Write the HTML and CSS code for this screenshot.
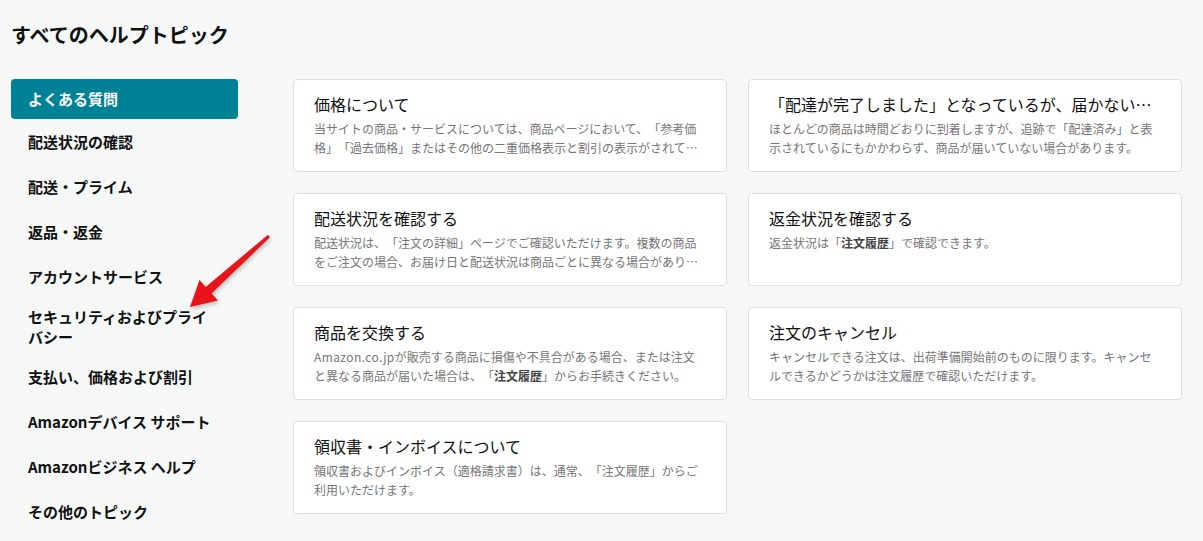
FILE: index.html
```html
<!DOCTYPE html>
<html lang="ja">
<head>
<meta charset="utf-8">
<title>すべてのヘルプトピック</title>
<link rel="stylesheet" href="styles.css">
</head>
<body>
<div class="page">
  <h1 class="heading">すべてのヘルプトピック</h1>
  <div class="layout">
    <nav class="sidebar">
      <a class="nav-item active">よくある質問</a>
      <a class="nav-item">配送状況の確認</a>
      <a class="nav-item">配送・プライム</a>
      <a class="nav-item">返品・返金</a>
      <a class="nav-item">アカウントサービス</a>
      <a class="nav-item">セキュリティおよびプライバシー</a>
      <a class="nav-item">支払い、価格および割引</a>
      <a class="nav-item">Amazonデバイス サポート</a>
      <a class="nav-item">Amazonビジネス ヘルプ</a>
      <a class="nav-item">その他のトピック</a>
    </nav>
    <div class="cards">
      <div class="card">
        <div class="card-title">価格について</div>
        <div class="card-desc">当サイトの商品・サービスについては、商品ページにおいて、「参考価格」「過去価格」またはその他の二重価格表示と割引の表示がされている場合があります。</div>
      </div>
      <div class="card">
        <div class="card-title">「配達が完了しました」となっているが、届かない場合</div>
        <div class="card-desc">ほとんどの商品は時間どおりに到着しますが、追跡で「配達済み」と表示されているにもかかわらず、商品が届いていない場合があります。</div>
      </div>
      <div class="card">
        <div class="card-title">配送状況を確認する</div>
        <div class="card-desc">配送状況は、「注文の詳細」ページでご確認いただけます。複数の商品をご注文の場合、お届け日と配送状況は商品ごとに異なる場合があります。</div>
      </div>
      <div class="card">
        <div class="card-title">返金状況を確認する</div>
        <div class="card-desc">返金状況は「<b>注文履歴</b>」で確認できます。</div>
      </div>
      <div class="card">
        <div class="card-title">商品を交換する</div>
        <div class="card-desc"><span class="latin">Amazon.co.jp</span>が販売する商品に損傷や不具合がある場合、または注文<span class="keep">と異なる</span>商品が届いた場合は、「<b>注文履歴</b>」からお手続きください。</div>
      </div>
      <div class="card">
        <div class="card-title">注文のキャンセル</div>
        <div class="card-desc">キャンセルできる注文は、出荷準備開始前のものに限ります。キャンセルできるかどうかは注文履歴で確認いただけます。</div>
      </div>
      <div class="card">
        <div class="card-title">領収書・インボイスについて</div>
        <div class="card-desc">領収書およびインボイス（適格請求書）は、通常、「注文履歴」からご利用いただけます。</div>
      </div>
    </div>
  </div>
</div>
<svg class="arrow" width="1203" height="541" viewBox="0 0 1203 541" aria-hidden="true">
  <polygon points="270,237.3 211.5,293.4 218,300.5 190,307 199.5,280 205.7,287 268,234.7" fill="#e8131b"/>
</svg>
</body>
</html>
```

FILE: styles.css
```css
* { box-sizing: border-box; }

html, body {
  margin: 0;
  padding: 0;
  background: #f6f8f8;
  font-family: "Noto Sans CJK JP", "Noto Sans", sans-serif;
  color: #111;
  text-spacing-trim: space-all;
}

.page {
  padding: 23px 0 0 11px;
}

.heading {
  margin: 0 0 32px 0;
  font-size: 20px;
  line-height: 24px;
  font-weight: 700;
  color: #0f1111;
}

.layout {
  display: flex;
  gap: 55px;
  align-items: flex-start;
}

.sidebar {
  width: 227px;
  display: flex;
  flex-direction: column;
}

.nav-item {
  display: flex;
  align-items: center;
  min-height: 45px;
  padding: 7.5px 17px;
  font-size: 15px;
  line-height: 20px;
  font-weight: 700;
  color: #111;
  text-decoration: none;
}

.nav-item.active {
  min-height: 40px;
  background: #008296;
  color: #fff;
  border-radius: 4px;
}

.cards {
  display: grid;
  grid-template-columns: 434px 434px;
  grid-auto-rows: 93px;
  gap: 21px;
}

.card {
  background: #fff;
  border: 1px solid #dcdfe0;
  border-radius: 4px;
  padding: 13px 20px 0 20px;
  overflow: hidden;
}

.card-title {
  font-size: 16px;
  line-height: 22px;
  color: #111;
  white-space: nowrap;
  overflow: hidden;
  text-overflow: ellipsis;
  margin-bottom: 4px;
}

.card-desc {
  font-size: 12px;
  line-height: 19px;
  color: #767676;
  display: -webkit-box;
  -webkit-line-clamp: 2;
  -webkit-box-orient: vertical;
  overflow: hidden;
}

.card-desc b {
  color: #444;
  font-weight: 700;
}

.latin {
  letter-spacing: 0.4px;
}

.keep {
  white-space: nowrap;
}

.arrow {
  position: absolute;
  left: 0;
  top: 0;
  pointer-events: none;
  filter: drop-shadow(1px 2px 2px rgba(0, 0, 0, 0.25));
}
```
